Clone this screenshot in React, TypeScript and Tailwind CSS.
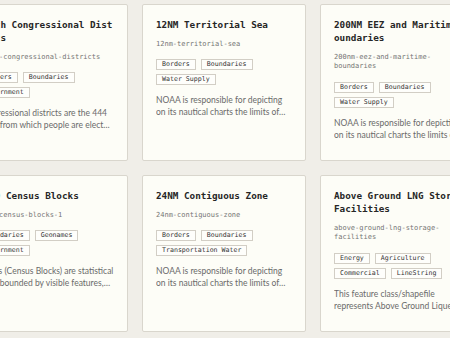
import React from "react";

type Card = { title: string; slug: string; tags: string[]; desc: string };

const cards: Card[] = [
  {
    title: "118th Congressional Districts",
    slug: "118th-congressional-districts",
    tags: ["Borders", "Boundaries", "Government"],
    desc: "Congressional districts are the 444 areas from which people are elected to the U.S. House of Representatives.",
  },
  {
    title: "12NM Territorial Sea",
    slug: "12nm-territorial-sea",
    tags: ["Borders", "Boundaries", "Water Supply"],
    desc: "NOAA is responsible for depicting on its nautical charts the limits of the 12 nautical mile Territorial Sea.",
  },
  {
    title: "200NM EEZ and Maritime Boundaries",
    slug: "200nm-eez-and-maritime-boundaries",
    tags: ["Borders", "Boundaries", "Water Supply"],
    desc: "NOAA is responsible for depicting on its nautical charts the limits of the Exclusive Economic Zone.",
  },
  {
    title: "2020 Census Blocks",
    slug: "2020-census-blocks-1",
    tags: ["Boundaries", "Geonames", "Government"],
    desc: "Blocks (Census Blocks) are statistical areas bounded by visible features, such as streets, roads and streams.",
  },
  {
    title: "24NM Contiguous Zone",
    slug: "24nm-contiguous-zone",
    tags: ["Borders", "Boundaries", "Transportation Water"],
    desc: "NOAA is responsible for depicting on its nautical charts the limits of the 24 nautical mile Contiguous Zone.",
  },
  {
    title: "Above Ground LNG Storage Facilities",
    slug: "above-ground-lng-storage-facilities",
    tags: ["Energy", "Agriculture", "Commercial", "LineString"],
    desc: "This feature class/shapefile represents Above Ground Liquefied Natural Gas storage facilities.",
  },
];

const mono = { fontFamily: '"DejaVu Sans Mono", "Liberation Mono", monospace' };
const sans = { fontFamily: 'Lato, "Open Sans", sans-serif' };

export default function App() {
  return (
    <div className="w-[450px] h-[338px] overflow-hidden bg-[#f0eee8]">
      <div className="ml-[-36px] pt-[4px] grid grid-cols-[164px_164px_164px] gap-[14px]">
        {cards.map((c) => (
          <div
            key={c.slug}
            className="h-[157px] bg-[#fdfdf7] border border-[#d9d6cd] rounded-[2px] px-[13px] pt-[13px] flex flex-col"
          >
            <div
              className="text-[9.3px] leading-[13px] font-semibold text-[#262626] break-all"
              style={mono}
            >
              {c.title}
            </div>
            <div
              className="mt-[9px] text-[7px] leading-[9.4px] text-[#757575]"
              style={mono}
            >
              {c.slug}
            </div>
            <div className="mt-[10px] flex flex-wrap gap-x-[5px] gap-y-[4px]">
              {c.tags.map((t) => (
                <span
                  key={t}
                  className="h-[11px] px-[5px] border border-[#d2cec5] bg-[#fefefb] text-[6.6px] leading-[9px] text-[#333333] flex items-center"
                  style={mono}
                >
                  {t}
                </span>
              ))}
            </div>
            <div
              className="mt-[9px] text-[8.5px] leading-[12px] text-[#6a6a6a] line-clamp-2"
              style={sans}
            >
              {c.desc}
            </div>
          </div>
        ))}
      </div>
    </div>
  );
}
